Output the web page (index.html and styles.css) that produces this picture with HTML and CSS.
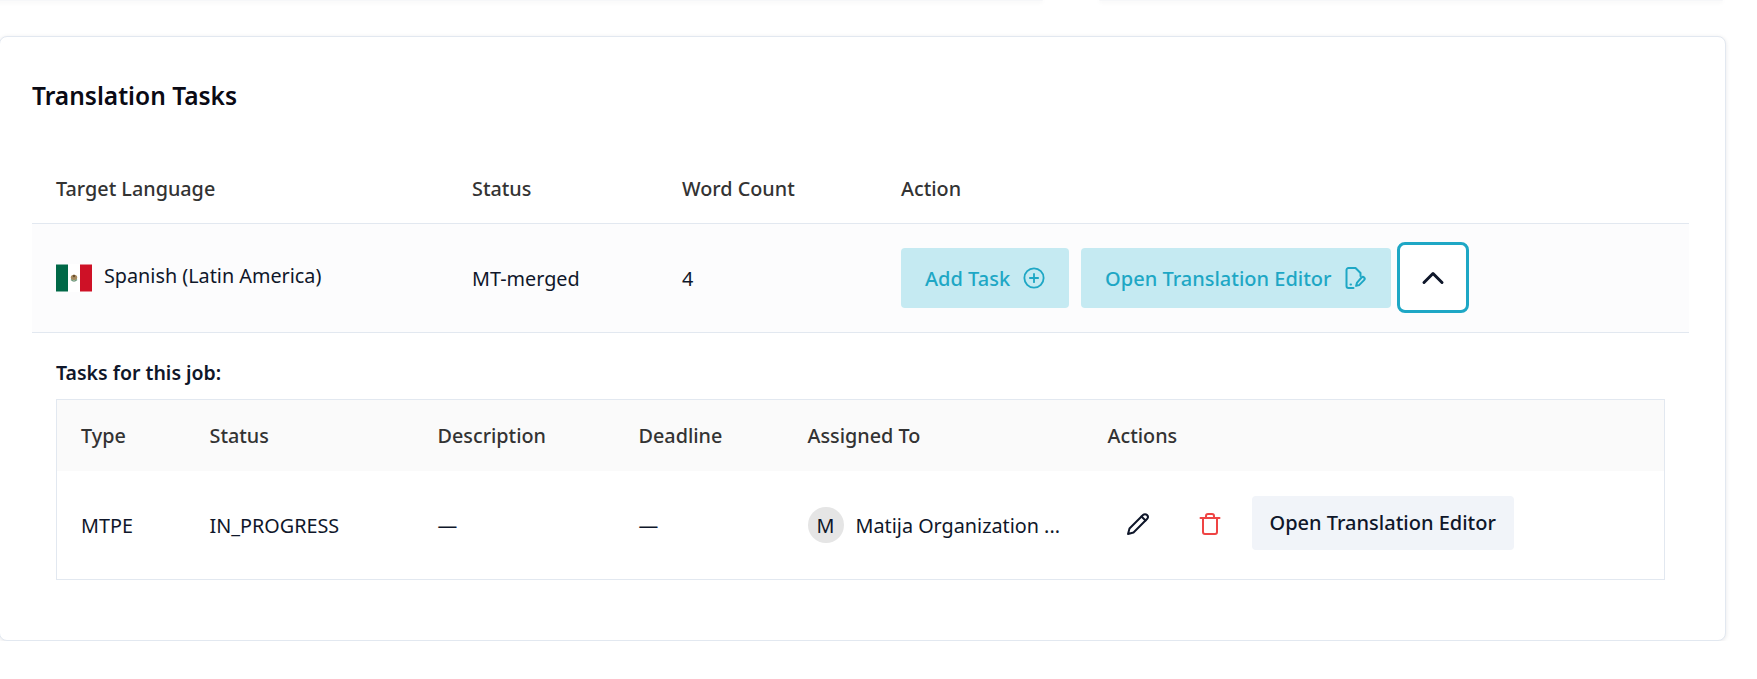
FILE: index.html
```html
<!DOCTYPE html>
<html lang="en">
<head>
<meta charset="UTF-8" />
<title>Translation Tasks</title>
<link rel="stylesheet" href="styles.css">
</head>
<body>

<div class="top-cards">
  <div class="top-card top-card-left"></div>
  <div class="top-card top-card-right"></div>
</div>

<section class="card">
  <h2 class="card-title">Translation Tasks</h2>

  <table class="jobs">
    <colgroup>
      <col class="col-lang"><col class="col-status"><col class="col-words"><col>
    </colgroup>
    <thead>
      <tr>
        <th>Target Language</th>
        <th>Status</th>
        <th>Word Count</th>
        <th>Action</th>
      </tr>
    </thead>
    <tbody>
      <tr class="job-row">
        <td>
          <div class="lang">
            <svg class="flag" viewBox="0 0 36 28" width="36" height="28">
              <rect width="12" height="28" fill="#006847"/>
              <rect x="12" width="12" height="28" fill="#fff"/>
              <rect x="24" width="12" height="28" fill="#ce1126"/>
              <rect width="12" height="1" fill="#7fb3a3"/>
              <rect x="24" width="12" height="1" fill="#e68892"/>
              <rect y="27" width="12" height="1" fill="#7fb3a3"/>
              <rect x="24" y="27" width="12" height="1" fill="#e68892"/>
              <ellipse cx="18" cy="13.5" rx="3.2" ry="2.8" fill="#a58a5f"/>
              <path d="M15 15.5q3 3 6 0" fill="none" stroke="#6f9a7c" stroke-width="1.2"/>
              <circle cx="18" cy="12" r="1.2" fill="#6b4e2e"/>
            </svg>
            <span>Spanish (Latin America)</span>
          </div>
        </td>
        <td class="cell-low">MT-merged</td>
        <td class="cell-low">4</td>
        <td>
          <div class="actions">
            <button class="btn btn-teal">Add Task
              <svg class="ico" viewBox="0 0 24 24" fill="none" stroke="currentColor" stroke-width="2" stroke-linecap="round"><circle cx="12" cy="12" r="10.5"/><path d="M12 7.5v9M7.5 12h9"/></svg>
            </button>
            <button class="btn btn-teal">Open Translation Editor
              <svg class="ico" viewBox="0 0 22 22" fill="none" stroke="currentColor" stroke-width="2" stroke-linecap="round" stroke-linejoin="round"><path d="M8.500 21H3.500a2 2 0 0 1-2-2V3a2 2 0 0 1 2-2h7l5 5v3"/><path d="M5.500 17.500h.5"/><path d="M16.500 10.500a1.800 1.800 0 0 1 2.600 2.600l-5 5-3 .8.800-3z"/></svg>
            </button>
            <button class="btn-toggle">
              <svg viewBox="0 0 24 24" width="36" height="36" fill="none" stroke="currentColor" stroke-width="2" stroke-linecap="round" stroke-linejoin="round"><path d="m18 15-6-6-6 6"/></svg>
            </button>
          </div>
        </td>
      </tr>
    </tbody>
  </table>

  <div class="job-tasks">
    <h3 class="job-tasks-title">Tasks for this job:</h3>
    <table class="tasks">
      <colgroup>
        <col class="col-type"><col class="col-tstatus"><col class="col-desc"><col class="col-deadline"><col class="col-assigned"><col>
      </colgroup>
      <thead>
        <tr>
          <th>Type</th>
          <th>Status</th>
          <th>Description</th>
          <th>Deadline</th>
          <th>Assigned To</th>
          <th>Actions</th>
        </tr>
      </thead>
      <tbody>
        <tr>
          <td>MTPE</td>
          <td>IN_PROGRESS</td>
          <td>—</td>
          <td>—</td>
          <td>
            <div class="assignee">
              <span class="avatar">M</span>
              <span class="assignee-name">Matija Organization ...</span>
            </div>
          </td>
          <td>
            <div class="task-actions">
              <button class="icon-btn">
                <svg viewBox="0 0 24 24" width="24" height="24" fill="none" stroke="#0f172a" stroke-width="2" stroke-linecap="round" stroke-linejoin="round"><path d="M2 22l1.500-5.500L17 3a2.800 2.800 0 0 1 4 4L7.500 20.500z"/><path d="m15.500 4.500 4 4"/></svg>
              </button>
              <button class="icon-btn">
                <svg viewBox="0 0 24 24" width="24" height="24" fill="none" stroke="#ef4444" stroke-width="2" stroke-linecap="round" stroke-linejoin="round"><path d="M2.500 6h19"/><path d="M19 6v14a2 2 0 0 1-2 2H7a2 2 0 0 1-2-2V6"/><path d="M8 6V4a2 2 0 0 1 2-2h4a2 2 0 0 1 2 2v2"/></svg>
              </button>
              <button class="btn btn-light">Open Translation Editor</button>
            </div>
          </td>
        </tr>
      </tbody>
    </table>
  </div>
</section>

</body>
</html>
```

FILE: styles.css
```css
* {
  box-sizing: border-box;
}
body {
  margin: 0;
  background: #fff;
  font-family: 'Noto Sans', Arial, sans-serif;
  font-size: 19.8px;
  color: #0f172a;
  overflow: hidden;
}
button {
  font-family: inherit;
  cursor: pointer;
}

/* bottoms of the cards cut off above */
.top-cards {
  display: flex;
  height: 1px;
  margin-left: -10px;
}
.top-card {
  height: 1px;
  background: #f6f7f9;
  box-shadow: 0 1px 4px rgba(15, 23, 42, 0.1);
  border-radius: 0 0 6px 6px;
}
.top-card-left {
  width: 1053px;
}
.top-card-right {
  width: 624px;
  margin-left: 56px;
}

.card {
  width: 1727px;
  margin: 35px 0 0 -1px;
  padding: 43px 36px 60px 32px;
  background: #fff;
  border: 1px solid #e2e8f0;
  border-radius: 8px;
  box-shadow: 0 1px 4px rgba(15, 23, 42, 0.1);
}
.card-title {
  margin: 0 0 42px;
  font-size: 24.5px;
  line-height: 32px;
  font-weight: 600;
  color: #0a0a14;
}

table {
  width: 100%;
  border-collapse: collapse;
  table-layout: fixed;
}
th {
  text-align: left;
  font-weight: 500;
  color: #333;
}

.jobs th {
  height: 69px;
  padding: 0 24px;
}
.jobs td {
  height: 109px;
  padding: 0 24px;
  border-top: 1px solid #e2e8f0;
  border-bottom: 1px solid #e2e8f0;
}
.jobs .cell-low {
  padding-top: 2px;
}
.job-row {
  background: #fcfcfd;
}
.col-lang {
  width: 416px;
}
.col-status {
  width: 210px;
}
.col-words {
  width: 219px;
}

.lang {
  display: flex;
  align-items: center;
  gap: 12px;
}
.lang span {
  margin-top: -4px;
}
.flag {
  flex: none;
}

.actions {
  display: flex;
  align-items: center;
  gap: 12px;
}
.btn {
  display: inline-flex;
  align-items: center;
  gap: 13px;
  border: none;
  border-radius: 4px;
  font-size: 20px;
  font-weight: 500;
}
.btn-teal {
  height: 60px;
  padding: 2px 24px 0;
  background: #c5eaf2;
  color: #1ea7c5;
}
.ico {
  width: 22px;
  height: 22px;
  flex: none;
  margin-top: -2px;
}
.btn-toggle {
  display: flex;
  align-items: center;
  justify-content: center;
  flex: none;
  width: 72px;
  height: 71px;
  margin-left: -6px;
  padding: 0;
  background: #fff;
  border: 3px solid #1ea7c5;
  border-radius: 8px;
  color: #0f172a;
}

.job-tasks {
  padding: 0 24px;
}
.job-tasks-title {
  margin: 26px 0 12px;
  font-size: 19.5px;
  line-height: 28px;
  font-weight: 600;
  color: #0f172a;
}
.tasks {
  border: 1px solid #e2e8f0;
}
.tasks th {
  height: 72px;
  padding: 1px 24px 0;
  background: #fafafa;
}
.tasks td {
  height: 108px;
  padding: 1px 24px 0;
}
.col-type {
  width: 129px;
}
.col-tstatus {
  width: 228px;
}
.col-desc {
  width: 201px;
}
.col-deadline {
  width: 169px;
}
.col-assigned {
  width: 300px;
}

.assignee {
  display: flex;
  align-items: center;
  gap: 12px;
}
.avatar {
  display: flex;
  align-items: center;
  justify-content: center;
  flex: none;
  width: 36px;
  height: 36px;
  border-radius: 50%;
  background: #e5e5e5;
}
.assignee-name {
  white-space: nowrap;
}

.task-actions {
  display: flex;
  align-items: center;
  margin-left: -6px;
  margin-bottom: 2px;
}
.icon-btn {
  display: flex;
  align-items: center;
  justify-content: center;
  width: 72px;
  height: 54px;
  padding: 0;
  background: none;
  border: none;
}
.btn-light {
  height: 54px;
  padding: 0 18px;
  margin-left: 6px;
  margin-bottom: 3px;
  background: #f1f4f9;
  color: #0f172a;
}
```
